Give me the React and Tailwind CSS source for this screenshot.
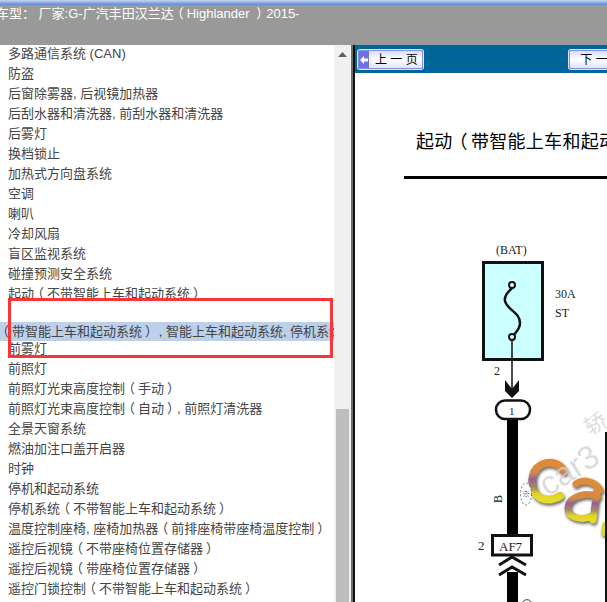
const cjk = "font-['Liberation_Sans','Noto_Sans_CJK_SC',sans-serif]";

const topRows = [
  "多路通信系统 (CAN)",
  "防盗",
  "后窗除雾器, 后视镜加热器",
  "后刮水器和清洗器, 前刮水器和清洗器",
  "后雾灯",
  "换档锁止",
  "加热式方向盘系统",
  "空调",
  "喇叭",
  "冷却风扇",
  "盲区监视系统",
  "碰撞预测安全系统",
  "起动（不带智能上车和起动系统）",
];

const bottomRows = [
  "前雾灯",
  "前照灯",
  "前照灯光束高度控制（手动）",
  "前照灯光束高度控制（自动）, 前照灯清洗器",
  "全景天窗系统",
  "燃油加注口盖开启器",
  "时钟",
  "停机和起动系统",
  "停机系统（不带智能上车和起动系统）",
  "温度控制座椅, 座椅加热器（前排座椅带座椅温度控制）",
  "遥控后视镜（不带座椅位置存储器）",
  "遥控后视镜（带座椅位置存储器）",
  "遥控门锁控制（不带智能上车和起动系统）",
];

// full-width brackets sit centred in their cell in the reference, nudge them there
function Cjk({ text }) {
  return text.split(/([（）])/).map((part, i) =>
    i % 2 ? (
      <span key={i} className={`inline-block ${part === "（" ? "-translate-x-[3px]" : "translate-x-[3px]"}`}>
        {part}
      </span>
    ) : (
      part
    )
  );
}

function Row({ text }) {
  return (
    <div className="h-5 pl-2 leading-5 whitespace-nowrap">
      <Cjk text={text} />
    </div>
  );
}

function NavButton({ label, back }) {
  return (
    <div className="flex h-[19px] items-center rounded-[2px] border border-[#8a8fd8] bg-gradient-to-b from-[#d8dcfa] via-white to-[#dfe2fa] shadow-[0_0_0_1px_#dfe4f5]">
      {back && (
        <span className="flex h-full w-[10px] items-center justify-center bg-[#6a72e6]">
          <svg width="8" height="8" viewBox="0 0 8 8">
            <path d="M0 4 L4 0 V2.5 H8 V5.5 H4 V8 Z" fill="#fff" />
          </svg>
        </span>
      )}
      <span className={`text-[12px] whitespace-pre text-black ${back ? "pr-[4px] pl-[6px]" : "pr-[6px] pl-[10px]"}`}>
        {label}
      </span>
    </div>
  );
}

function Diagram() {
  const serif = "'Liberation Serif','Noto Sans CJK SC',serif";
  return (
    <svg width="252" height="423" viewBox="355 179 252 423" className="block">
      <defs>
        <linearGradient id="logoC" x1="0" y1="0" x2="0" y2="1">
          <stop offset="0" stopColor="#e08a3a" />
          <stop offset="0.28" stopColor="#cf8a48" />
          <stop offset="0.45" stopColor="#96609c" />
          <stop offset="0.68" stopColor="#a98a60" />
          <stop offset="0.85" stopColor="#e0d428" />
          <stop offset="1" stopColor="#e4dc28" />
        </linearGradient>
      </defs>
      {/* fuse */}
      <rect x="483.5" y="262.5" width="59" height="97" fill="#ccffff" stroke="#111" strokeWidth="3" />
      <path d="M512 288 C508 292 504 296 505 301 C507 310 520 312 520 323 C520 329 516 332 513 336" fill="none" stroke="#111" strokeWidth="2.5" />
      <circle cx="512" cy="285" r="3" fill="#fff" stroke="#111" strokeWidth="2" />
      <circle cx="512" cy="337" r="3" fill="#fff" stroke="#111" strokeWidth="2" />
      <path d="M512 340 V390" stroke="#111" strokeWidth="1.5" />
      <path d="M505 380 L512 389 L519 380 V391 L512 398 L505 391 Z" fill="#111" />
      {/* connector 1 */}
      <rect x="496" y="400.5" width="34" height="18.5" rx="9" fill="#fff" stroke="#111" strokeWidth="2.5" />
      {/* wire */}
      <rect x="507" y="420" width="11" height="115" fill="#000" />
      {/* AF7 */}
      <rect x="492.5" y="535.5" width="39" height="19.5" fill="#fff" stroke="#111" strokeWidth="3" />
      <path d="M499 565 L512 557 L526 565 M499 575 L512 567 L526 575" fill="none" stroke="#111" strokeWidth="3" />
      <rect x="507" y="572" width="11" height="30" fill="#000" />
      <path d="M523 602 C524 599 530 599 531 602" fill="none" stroke="#333" />
      <g fontFamily={serif} fontSize="12" fill="#222">
        <text x="496" y="254">(BAT)</text>
        <text x="555" y="298">30A</text>
        <text x="555" y="317">ST</text>
        <text x="494" y="375">2</text>
        <text x="509" y="415" fontSize="11">1</text>
        <text x="478" y="550" fontSize="13">2</text>
        <text x="499" y="551" fontSize="13">AF7</text>
        <text x="0" y="0" fontSize="12" transform="translate(502 503) rotate(-90)">B</text>
      </g>
      {/* watermark */}
      <g fill="none" strokeLinecap="round" style={{ filter: "drop-shadow(1px 2px 1.5px #666)" }}>
        <path d="M564 471 C558 461 545 460 537 468 C529 477 532 494 541 498 C548 501 555 499 560 496" stroke="url(#logoC)" strokeWidth="8" />
        <path d="M576 484 C584 478 596 482 600 490" stroke="#dc8f3a" strokeWidth="7" />
        <path d="M598 497 C588 492 570 495 568 507 C567 518 582 521 592 516 M597 490 L593 520" stroke="url(#logoC)" strokeWidth="7" />
        <path d="M605 525 L604 533" stroke="#e0d428" strokeWidth="6" />
      </g>
      <text x="548" y="497" fontFamily="'Liberation Sans',sans-serif" fontSize="33" fill="#cfcfcf" opacity="0.75" transform="rotate(-33 548 497)">car3</text>
      <text x="590" y="436" fontFamily="'Noto Sans CJK SC',sans-serif" fontSize="22" fill="#ddd" transform="rotate(-30 590 436)">轿</text>
      <ellipse cx="526" cy="494" rx="5.5" ry="11" fill="#fff" stroke="#333" strokeWidth="0.7" strokeDasharray="2 2" />
      <text x="522" y="497" fontSize="8" fill="#333">※</text>
      <rect x="605" y="432" width="2" height="170" fill="#111" />
    </svg>
  );
}

export default function App() {
  return (
    <div className={`relative flex h-[602px] w-[607px] flex-col overflow-hidden bg-white ${cjk}`}>
      <div className="h-[5px] bg-gradient-to-b from-[#c7d6f2] to-[#5f86cf]" />
      <div className="h-10 overflow-hidden bg-[#999999] text-[13px] leading-[17px] whitespace-nowrap text-white">
        <span className="-ml-[4px] inline-block">
          <Cjk text="车型： 厂家:G-广汽丰田汉兰达（Highlander ）2015-" />
        </span>
      </div>
      <div className="flex min-h-0 flex-1">
        <div className="w-[334px] overflow-hidden text-[13px] text-[#444]">
          <div className="-mt-px">
            {topRows.map((t) => (
              <Row key={t} text={t} />
            ))}
          </div>
          <div className="mt-[18px] h-[19px] overflow-hidden bg-[#bcd0ea] leading-[19px] whitespace-nowrap">
            <span className="-ml-px inline-block">
              <Cjk text="（带智能上车和起动系统） , 智能上车和起动系统, 停机系统" />
            </span>
          </div>
          <div className="-mt-[2px]">
            {bottomRows.map((t) => (
              <Row key={t} text={t} />
            ))}
          </div>
        </div>
        {/* scrollbar */}
        <div className="flex w-[17px] flex-col items-center bg-[#f0f0f0]">
          <svg width="9" height="5" viewBox="0 0 9 5" className="mt-[7px]">
            <path d="M0 5 L4.5 0 L9 5 Z" fill="#606060" />
          </svg>
          <div className="mt-[352px] h-[195px] w-[13px] bg-[#bdbdbd]" />
        </div>
        <div className="w-[2px] bg-[#6e6e6e]" />
        <div className="w-[2px] bg-[#111]" />
        <div className="min-w-0 flex-1">
          <div className="flex h-[28px] items-center justify-between overflow-hidden bg-[#006699] pt-[1px] pl-[3px]">
            <NavButton label="上 一 页" back />
            <div className="-mr-[23px] shrink-0">
              <NavButton label="下 一 页" />
            </div>
          </div>
          <div className="h-[82px] overflow-hidden pt-[57px] pl-[61px] text-[18px] leading-[24px] tracking-[0.3px] whitespace-nowrap text-black">
            <Cjk text="起动（带智能上车和起动系统）" />
          </div>
          <div className="mt-[21px] ml-[49px] h-[3px] bg-black" />
          <Diagram />
        </div>
      </div>
      {/* red annotation box over the list */}
      <div className="absolute top-[298px] left-[8px] h-[60px] w-[325px] border-[3px] border-[#fb3535]" />
    </div>
  );
}
